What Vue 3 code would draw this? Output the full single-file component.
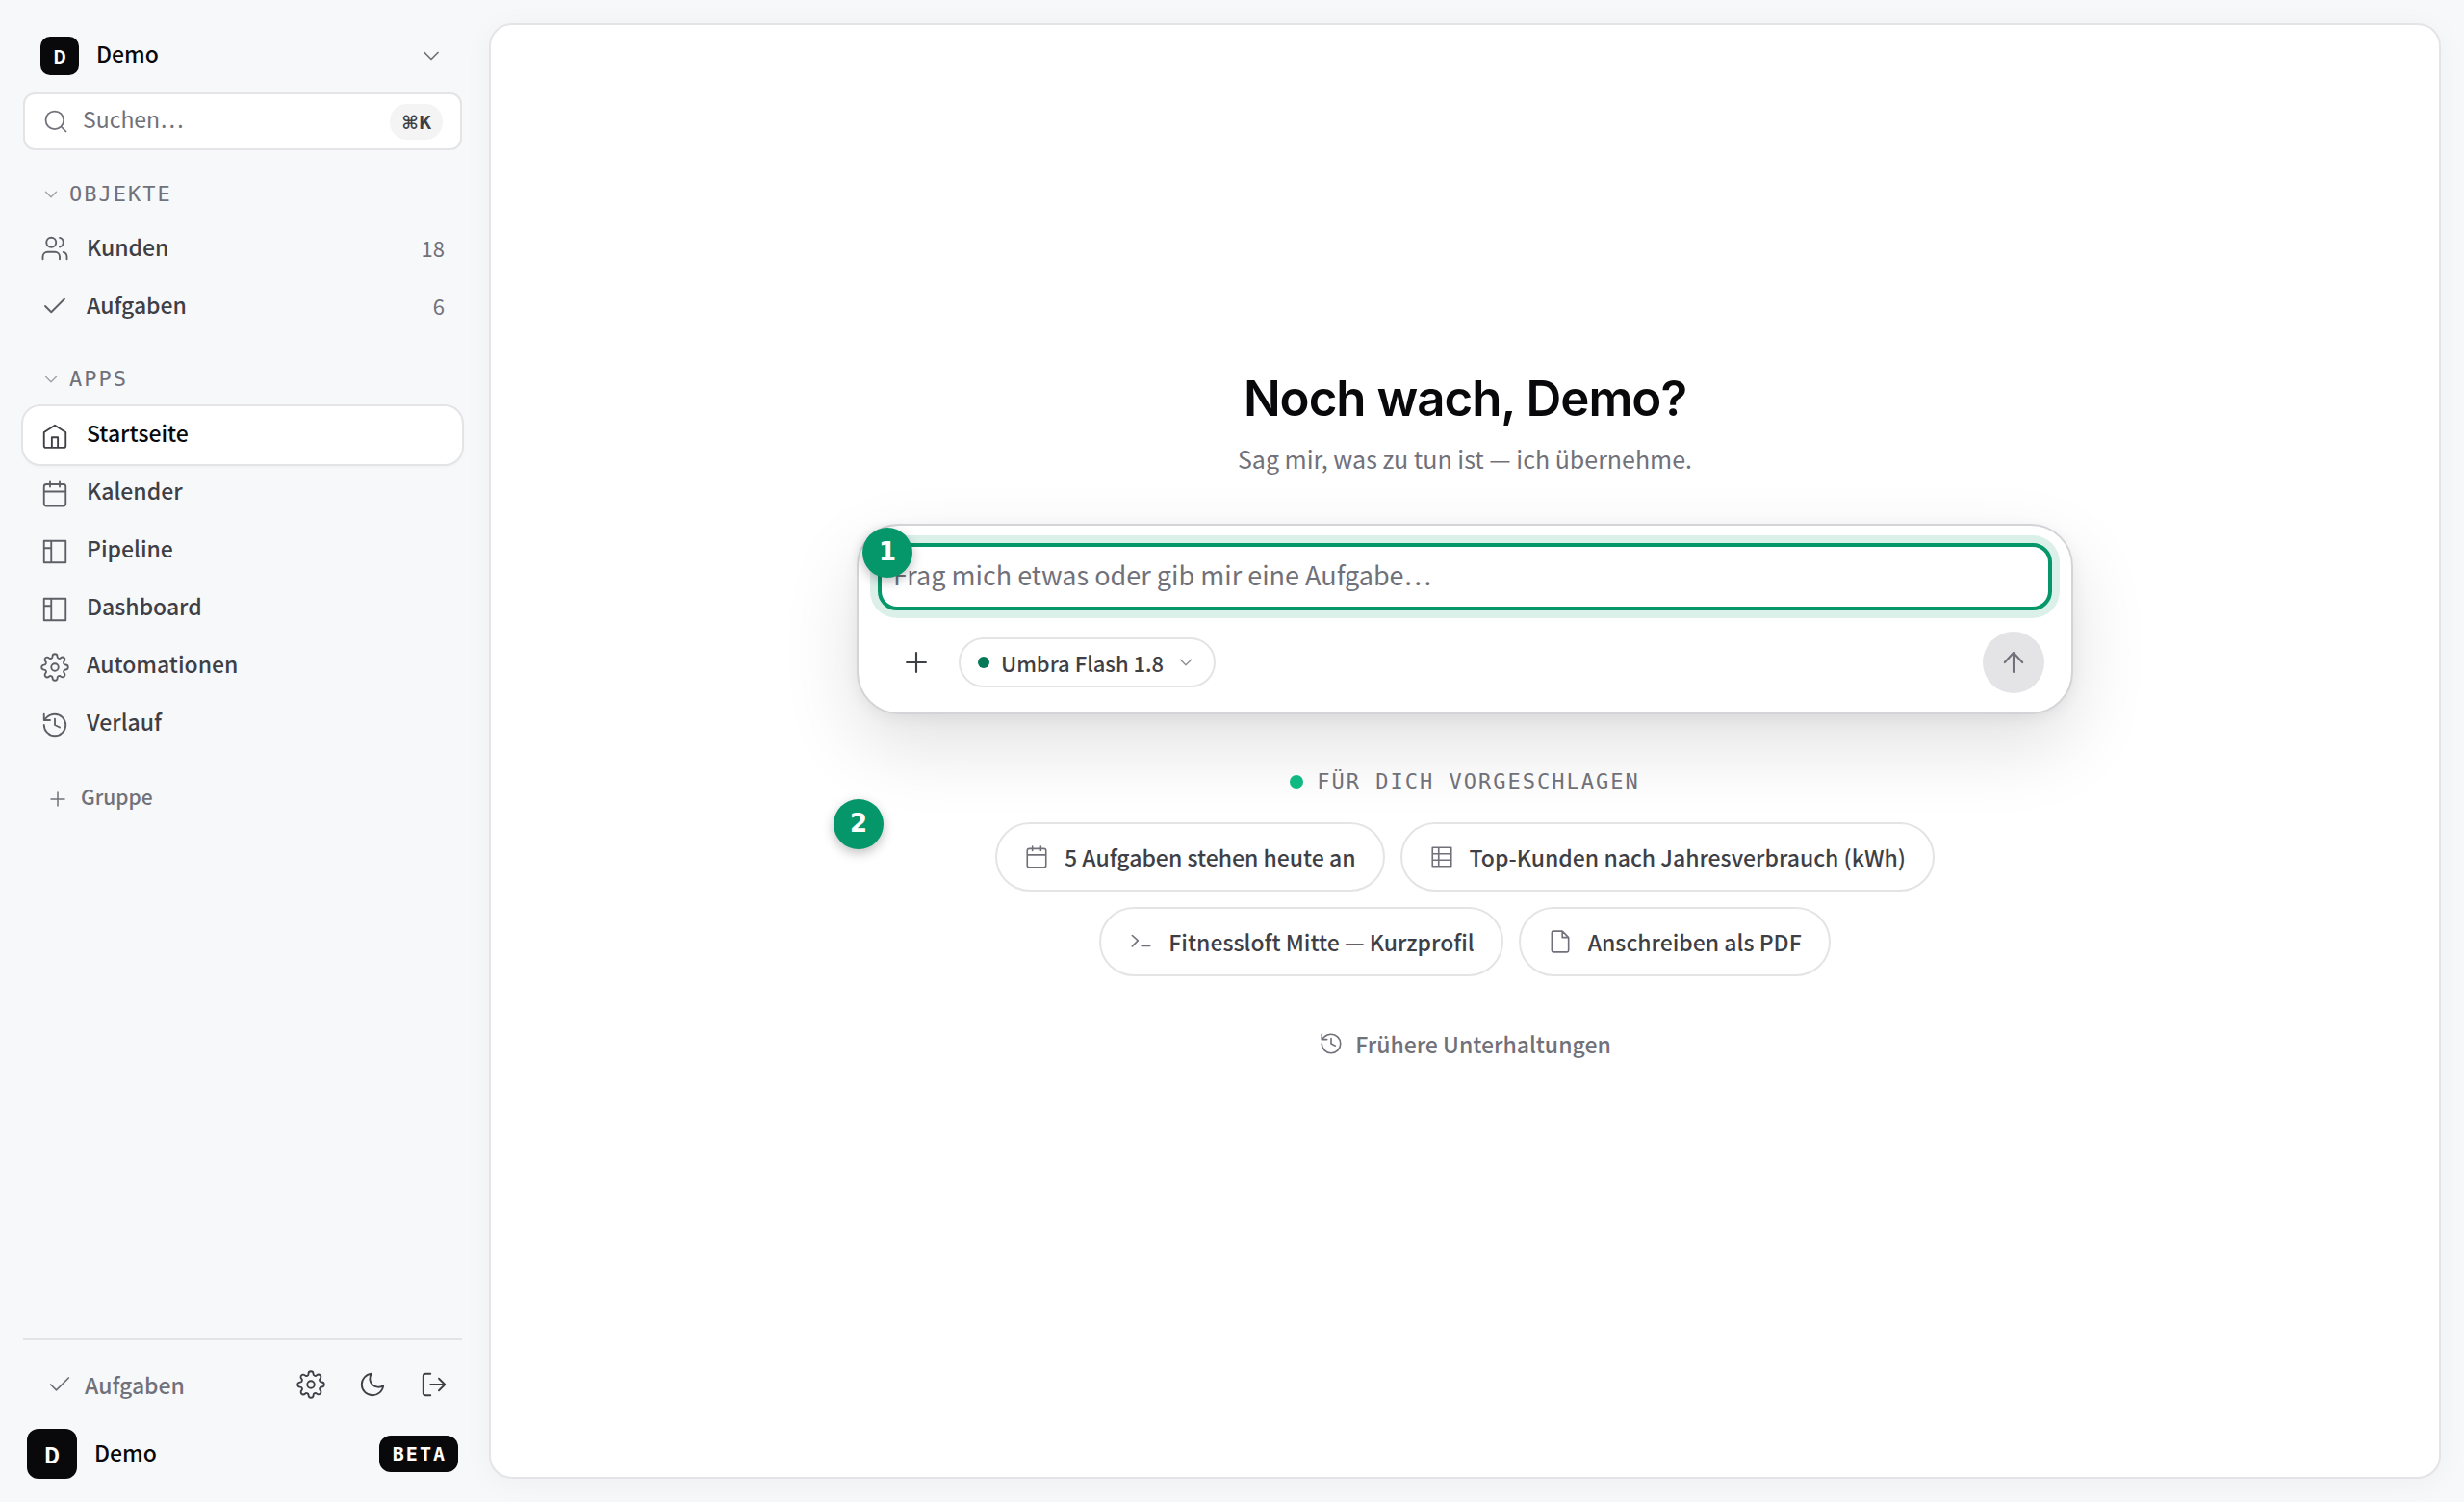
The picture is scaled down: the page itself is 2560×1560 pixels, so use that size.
<template>
  <div class="shell">
    <aside class="sidebar">
      <button type="button" class="workspace">
        <span class="avatar avatar-sm">D</span>
        <span class="workspace-name">Demo</span>
        <svg class="icon icon-28" viewBox="0 0 24 24"><path :d="icons.chevron" /></svg>
      </button>

      <label class="search">
        <svg class="icon icon-28" viewBox="0 0 24 24"><path :d="icons.search" /></svg>
        <input v-model="query" type="search" placeholder="Suchen…" aria-label="Suchen" />
        <kbd><span class="cmd">⌘</span>K</kbd>
      </label>

      <nav class="nav">
        <section v-for="group in groups" :key="group.title" class="group" :class="group.kind">
          <button type="button" class="group-title">
            <svg class="icon icon-22" viewBox="0 0 24 24"><path :d="icons.chevron" /></svg>
            {{ group.title }}
          </button>
          <a
            v-for="item in group.items"
            :key="item.label"
            href="#"
            class="nav-item"
            :class="{ active: item.label === current }"
            @click.prevent="current = item.label"
          >
            <svg class="icon icon-30" viewBox="0 0 24 24"><path :d="icons[item.icon]" /></svg>
            <span class="nav-label">{{ item.label }}</span>
            <span v-if="item.count" class="nav-count">{{ item.count }}</span>
          </a>
        </section>
        <button type="button" class="add-group">
          <svg class="icon icon-24" viewBox="0 0 24 24"><path :d="icons.plus" /></svg>
          <span class="add-label">Gruppe</span>
        </button>
      </nav>

      <footer class="footer">
        <div class="footer-tools">
          <a href="#" class="footer-link">
            <svg class="icon icon-28" viewBox="0 0 24 24"><path :d="icons.check" /></svg>
            Aufgaben
          </a>
          <button v-for="tool in tools" :key="tool.icon" type="button" class="tool" :aria-label="tool.label">
            <svg class="icon icon-30" viewBox="0 0 24 24"><path :d="icons[tool.icon]" /></svg>
          </button>
        </div>
        <div class="account">
          <span class="avatar avatar-lg">D</span>
          <span class="account-name">Demo</span>
          <span class="beta">BETA</span>
        </div>
      </footer>
    </aside>

    <main class="main">
      <h1>Noch wach, Demo?</h1>
      <p class="subtitle">Sag mir, was zu tun ist — ich übernehme.</p>

      <form class="composer" @submit.prevent>
        <div class="prompt">
          <textarea v-model="prompt" rows="1" placeholder="Frag mich etwas oder gib mir eine Aufgabe…" aria-label="Aufgabe"></textarea>
          <span class="step step-prompt">1</span>
        </div>
        <div class="composer-bar">
          <button type="button" class="attach" aria-label="Anhang hinzufügen">
            <svg class="icon icon-34" viewBox="0 0 24 24"><path :d="icons.plus" /></svg>
          </button>
          <button type="button" class="model">
            <span class="model-dot"></span>
            Umbra Flash 1.8
            <svg class="icon icon-22" viewBox="0 0 24 24"><path :d="icons.chevron" /></svg>
          </button>
          <button type="submit" class="send" aria-label="Senden">
            <svg class="icon icon-34" viewBox="0 0 24 24"><path :d="icons.arrowUp" /></svg>
          </button>
        </div>
      </form>

      <h2><span class="live-dot"></span>FÜR DICH VORGESCHLAGEN</h2>
      <div class="chips">
        <span class="step step-chips">2</span>
        <button v-for="chip in chips" :key="chip.label" type="button" class="chip">
          <svg class="icon icon-26" viewBox="0 0 24 24"><path :d="icons[chip.icon]" /></svg>
          {{ chip.label }}
        </button>
      </div>

      <button type="button" class="history">
        <svg class="icon icon-26" viewBox="0 0 24 24"><path :d="icons.history" /></svg>
        Frühere Unterhaltungen
      </button>
    </main>
  </div>
</template>

<script setup>
  import { ref } from 'vue';

  const query = ref('');
  const prompt = ref('');
  const current = ref('Startseite');

  // all icons are stroked on a 24 x 24 grid
  const icons = {
    chevron: 'M6 9l6 6 6-6',
    search: 'M19 11a8 8 0 1 1-16 0 8 8 0 0 1 16 0zM21 21l-4.35-4.35',
    users: 'M16 21v-2a4 4 0 0 0-4-4H6a4 4 0 0 0-4 4v2M13 7a4 4 0 1 1-8 0 4 4 0 0 1 8 0zM22 21v-2a4 4 0 0 0-3-3.87M16 3.13a4 4 0 0 1 0 7.75',
    check: 'M20 6L9 17l-5-5',
    home: 'M3 8.8L12 3l9 5.8V20a1.5 1.5 0 0 1-1.5 1.5h-15A1.5 1.5 0 0 1 3 20zM9.5 21.5v-8.5h5v8.5',
    calendar: 'M5 4h14a2 2 0 0 1 2 2v14a2 2 0 0 1-2 2H5a2 2 0 0 1-2-2V6a2 2 0 0 1 2-2zM16 2v4M8 2v4M3 10h18',
    panel: 'M3 3h18v18H3zM9 3v18M3 9h6',
    table: 'M3 3h18v18H3zM9 3v18M3 9h18M3 15h18',
    gear: 'M15 12a3 3 0 1 1-6 0 3 3 0 0 1 6 0zM19.4 15a1.65 1.65 0 0 0 .33 1.82l.06.06a2 2 0 0 1 0 2.83 2 2 0 0 1-2.83 0l-.06-.06a1.65 1.65 0 0 0-1.82-.33 1.65 1.65 0 0 0-1 1.51V21a2 2 0 0 1-2 2 2 2 0 0 1-2-2v-.09A1.65 1.65 0 0 0 9 19.4a1.65 1.65 0 0 0-1.82.33l-.06.06a2 2 0 0 1-2.83 0 2 2 0 0 1 0-2.83l.06-.06a1.65 1.65 0 0 0 .33-1.82 1.65 1.65 0 0 0-1.51-1H3a2 2 0 0 1-2-2 2 2 0 0 1 2-2h.09A1.65 1.65 0 0 0 4.6 9a1.65 1.65 0 0 0-.33-1.82l-.06-.06a2 2 0 0 1 0-2.83 2 2 0 0 1 2.83 0l.06.06a1.65 1.65 0 0 0 1.82.33H9a1.65 1.65 0 0 0 1-1.51V3a2 2 0 0 1 2-2 2 2 0 0 1 2 2v.09a1.65 1.65 0 0 0 1 1.51 1.65 1.65 0 0 0 1.82-.33l.06-.06a2 2 0 0 1 2.83 0 2 2 0 0 1 0 2.83l-.06.06a1.65 1.65 0 0 0-.33 1.82V9a1.65 1.65 0 0 0 1.51 1H21a2 2 0 0 1 2 2 2 2 0 0 1-2 2h-.09a1.65 1.65 0 0 0-1.51 1z',
    history: 'M3 12a9 9 0 1 0 9-9 9.75 9.75 0 0 0-6.74 2.74L3 8M3 3v5h5M12 7v5l4 2',
    plus: 'M12 5v14M5 12h14',
    moon: 'M21 12.79A9 9 0 1 1 11.21 3 7 7 0 0 0 21 12.79z',
    logout: 'M9 21H5a2 2 0 0 1-2-2V5a2 2 0 0 1 2-2h4M16 17l5-5-5-5M21 12H9',
    arrowUp: 'M12 19V5M5.500 12L12 5l6.500 7',
    terminal: 'M4 6l5.5 5L4 16.5M13 16h8',
    file: 'M14 2H5.5A1.5 1.5 0 0 0 4 3.5v17A1.5 1.5 0 0 0 5.5 22h13a1.5 1.5 0 0 0 1.5-1.5V8zM14 2v6h6',
  };

  const groups = [
    {
      title: 'OBJEKTE',
      kind: 'objects',
      items: [
        { label: 'Kunden', icon: 'users', count: 18 },
        { label: 'Aufgaben', icon: 'check', count: 6 },
      ],
    },
    {
      title: 'APPS',
      kind: 'apps',
      items: [
        { label: 'Startseite', icon: 'home' },
        { label: 'Kalender', icon: 'calendar' },
        { label: 'Pipeline', icon: 'panel' },
        { label: 'Dashboard', icon: 'panel' },
        { label: 'Automationen', icon: 'gear' },
        { label: 'Verlauf', icon: 'history' },
      ],
    },
  ];

  const tools = [
    { label: 'Einstellungen', icon: 'gear' },
    { label: 'Dunkles Design', icon: 'moon' },
    { label: 'Abmelden', icon: 'logout' },
  ];

  const chips = [
    { label: '5 Aufgaben stehen heute an', icon: 'calendar' },
    { label: 'Top-Kunden nach Jahresverbrauch (kWh)', icon: 'table' },
    { label: 'Fitnessloft Mitte — Kurzprofil', icon: 'terminal' },
    { label: 'Anschreiben als PDF', icon: 'file' },
  ];
</script>

<style>
  body {
    margin: 0;
    background: #f7f8fa;
  }
</style>

<style scoped>
  .shell {
    display: flex;
    min-height: 100vh;
    box-sizing: border-box;
    padding: 24px;
    gap: 28px;
    font-family: "Noto Sans CJK SC", "Noto Sans", sans-serif;
    font-size: 23px;
    line-height: 36px;
    color: #3f3f46;
  }

  button,
  input,
  textarea,
  kbd {
    font: inherit;
    color: inherit;
  }

  button {
    display: flex;
    align-items: center;
    padding: 0;
    border: 0;
    background: none;
    cursor: pointer;
  }

  a {
    color: inherit;
    text-decoration: none;
  }

  .icon {
    flex: none;
    fill: none;
    stroke: currentColor;
    stroke-width: 1.5;
    stroke-linecap: round;
    stroke-linejoin: round;
  }

  .icon-22 { width: 22px; height: 22px; }
  .icon-24 { width: 24px; height: 24px; }
  .icon-26 { width: 26px; height: 26px; }
  .icon-28 { width: 28px; height: 28px; }
  .icon-30 { width: 30px; height: 30px; }
  .icon-34 { width: 34px; height: 34px; }

  /* sidebar */
  .sidebar {
    display: flex;
    flex-direction: column;
    flex: none;
    width: 456px;
  }

  .avatar {
    display: flex;
    align-items: center;
    justify-content: center;
    flex: none;
    background: #09090b;
    color: #fff;
    font-weight: 700;
  }

  .avatar-sm {
    width: 40px;
    height: 40px;
    border-radius: 10px;
    font-size: 19px;
  }

  .avatar-lg {
    width: 52px;
    height: 52px;
    border-radius: 12px;
  }

  .workspace {
    gap: 18px;
    height: 68px;
    padding: 0 18px;
    color: #71717a;
  }

  .workspace-name,
  .account-name {
    flex: 1;
    text-align: left;
    font-weight: 500;
    color: #09090b;
  }

  .workspace-name {
    padding-bottom: 6px;
  }

  .account-name {
    padding-bottom: 4px;
  }

  .search {
    display: flex;
    align-items: center;
    gap: 14px;
    box-sizing: border-box;
    height: 60px;
    margin-top: 4px;
    padding: 0 18px;
    border: 2px solid #e4e4e7;
    border-radius: 12px;
    background: #fff;
    color: #71717a;
  }

  .search input {
    flex: 1;
    min-width: 0;
    height: 36px;
    padding: 0 0 6px;
    border: 0;
    outline: 0;
    background: none;
  }

  input::placeholder,
  textarea::placeholder {
    color: #71717a;
    opacity: 1;
  }

  kbd {
    padding: 0 12px;
    border-radius: 18px;
    background: #f4f4f5;
    font-size: 19px;
    font-weight: 700;
    color: #3f3f46;
  }

  .cmd {
    font-family: "DejaVu Sans", sans-serif;
  }

  .nav {
    flex: 1;
  }

  .group-title {
    gap: 8px;
    height: 40px;
    padding: 0 18px;
    font-family: "DejaVu Sans Mono", monospace;
    font-size: 22px;
    letter-spacing: 2px;
    color: #71717a;
  }

  .group-title .icon {
    color: #a1a1aa;
  }

  .objects {
    padding-top: 26px;
  }

  .objects .group-title {
    margin-bottom: 6px;
  }

  .apps {
    padding-top: 26px;
  }

  .apps .group-title {
    margin-bottom: 8px;
  }

  .nav-item {
    display: flex;
    align-items: center;
    gap: 18px;
    box-sizing: border-box;
    height: 60px;
    padding: 0 18px;
    border-radius: 18px;
    font-weight: 500;
  }

  .apps .nav-item {
    padding-top: 2px;
  }

  .nav-item .icon {
    color: #5f5f67;
  }

  .nav-label {
    flex: 1;
    padding-bottom: 4px;
  }

  .apps .nav-label {
    padding-bottom: 8px;
  }

  .nav-count {
    padding-bottom: 2px;
    font-size: 22px;
    font-weight: 400;
    color: #71717a;
  }

  .active {
    background: #fff;
    box-shadow: 0 0 0 2px #e4e4e7, 0 2px 4px rgba(0, 0, 0, 0.05);
    color: #09090b;
  }

  .active .icon {
    color: #3f3f46;
  }

  .add-group {
    gap: 12px;
    height: 40px;
    margin-top: 28px;
    padding: 0 24px;
    font-size: 21px;
    font-weight: 500;
    color: #71717a;
  }

  .add-label {
    padding-bottom: 6px;
  }

  .footer {
    border-top: 2px solid #e4e4e7;
  }

  .footer-tools {
    display: flex;
    align-items: center;
    height: 64px;
    margin-top: 14px;
  }

  .footer-link {
    display: flex;
    align-items: center;
    flex: 1;
    gap: 12px;
    padding-left: 24px;
    font-weight: 500;
    color: #71717a;
  }

  .tool {
    justify-content: center;
    width: 58px;
    height: 60px;
  }

  .tool + .tool {
    margin-left: 6px;
  }

  .account {
    display: flex;
    align-items: center;
    gap: 18px;
    padding: 14px 4px 0;
  }

  .beta {
    padding: 0 12px 0 14px;
    border-radius: 12px;
    background: #09090b;
    font-family: "DejaVu Sans Mono", monospace;
    font-size: 20px;
    font-weight: 700;
    line-height: 38px;
    letter-spacing: 2px;
    color: #fff;
  }

  /* start page */
  .main {
    display: flex;
    flex-direction: column;
    align-items: center;
    justify-content: center;
    flex: 1;
    box-sizing: border-box;
    padding: 0 48px 70px;
    border: 2px solid #e4e4e7;
    border-radius: 24px;
    background: #fff;
    box-shadow: 0 4px 32px rgba(0, 0, 0, 0.04);
  }

  h1 {
    margin: 0;
    font-family: Inter, sans-serif;
    font-size: 51px;
    font-weight: 600;
    line-height: 64px;
    letter-spacing: -1px;
    color: #09090b;
  }

  .subtitle {
    margin: 10px 0 0;
    font-size: 25px;
    line-height: 40px;
    color: #71717a;
  }

  .composer {
    box-sizing: border-box;
    width: 100%;
    max-width: 1264px;
    margin-top: 48px;
    padding: 18px 20px 20px;
    border: 2px solid #d4d4d8;
    border-radius: 44px;
    background: #fff;
    box-shadow: 0 32px 80px rgba(0, 0, 0, 0.12), 0 4px 16px rgba(0, 0, 0, 0.06);
  }

  .prompt {
    position: relative;
  }

  .prompt textarea {
    display: block;
    box-sizing: border-box;
    width: 100%;
    height: 70px;
    padding: 9px 12px;
    border: 4px solid #059669;
    border-radius: 20px;
    outline: 0;
    background: #fff;
    box-shadow: 0 0 0 8px rgba(5, 150, 105, 0.14);
    font-size: 27px;
    line-height: 40px;
    resize: none;
  }

  .step {
    position: absolute;
    width: 52px;
    height: 52px;
    border-radius: 50%;
    background: #059669;
    box-shadow: 0 4px 12px rgba(0, 0, 0, 0.25);
    font-family: "DejaVu Sans", sans-serif;
    font-size: 26px;
    font-weight: 700;
    line-height: 50px;
    text-align: center;
    color: #fff;
  }

  .step-prompt {
    top: -16px;
    left: -16px;
  }

  .step-chips {
    top: -24px;
    left: -24px;
  }

  .composer-bar {
    display: flex;
    align-items: center;
    gap: 12px;
    margin-top: 22px;
    padding: 0 8px;
  }

  .attach,
  .send {
    justify-content: center;
    width: 64px;
    height: 64px;
    border-radius: 50%;
  }

  .model {
    gap: 12px;
    height: 52px;
    padding: 0 18px;
    border: 2px solid #e4e4e7;
    border-radius: 26px;
    font-size: 22px;
    font-weight: 500;
  }

  .model .icon {
    color: #8e8e96;
  }

  .model-dot {
    width: 12px;
    height: 12px;
    border-radius: 50%;
    background: #047857;
  }

  .send {
    margin-left: auto;
    background: #e4e4e7;
    color: #71717a;
  }

  h2 {
    display: flex;
    align-items: center;
    gap: 14px;
    margin: 50px 0 0;
    font-family: "DejaVu Sans Mono", monospace;
    font-size: 22px;
    font-weight: 400;
    line-height: 40px;
    letter-spacing: 2px;
    color: #71717a;
  }

  .live-dot {
    width: 14px;
    height: 14px;
    border-radius: 50%;
    background: #10b981;
  }

  .chips {
    position: relative;
    display: flex;
    flex-wrap: wrap;
    justify-content: center;
    gap: 16px;
    box-sizing: border-box;
    width: 100%;
    max-width: 1264px;
    margin-top: 22px;
    padding: 0 120px;
  }

  .chip {
    gap: 16px;
    height: 72px;
    padding: 0 28px;
    border: 2px solid #e4e4e7;
    border-radius: 36px;
    background: #fff;
    font-weight: 500;
  }

  .chip .icon {
    color: #71717a;
  }

  .history {
    gap: 12px;
    height: 48px;
    margin-top: 46px;
    font-weight: 500;
    color: #71717a;
  }
</style>
